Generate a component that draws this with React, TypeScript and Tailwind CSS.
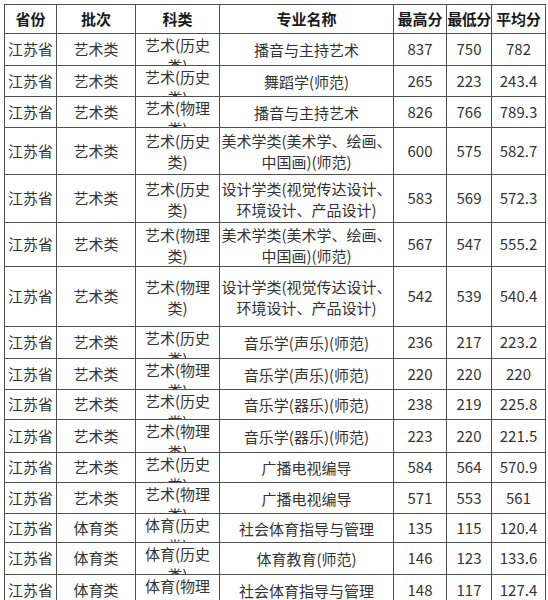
import React from "react";

type Row = {
  id: number;
  h: string;
  batch: string;
  subject: string[];
  major: string[];
  max: string;
  min: string;
  avg: string;
};

const art = "艺术类";
const hist = ["艺术(历史", "类)"];
const phys = ["艺术(物理", "类)"];

const rows: Row[] = [
  { id: 1, h: "h-[32px]", batch: art, subject: hist, major: ["播音与主持艺术"], max: "837", min: "750", avg: "782" },
  { id: 2, h: "h-[31px]", batch: art, subject: hist, major: ["舞蹈学(师范)"], max: "265", min: "223", avg: "243.4" },
  { id: 3, h: "h-[31px]", batch: art, subject: phys, major: ["播音与主持艺术"], max: "826", min: "766", avg: "789.3" },
  { id: 4, h: "h-[47px]", batch: art, subject: hist, major: ["美术学类(美术学、绘画、", "中国画)(师范)"], max: "600", min: "575", avg: "582.7" },
  { id: 5, h: "h-[48px]", batch: art, subject: hist, major: ["设计学类(视觉传达设计、", "环境设计、产品设计)"], max: "583", min: "569", avg: "572.3" },
  { id: 6, h: "h-[44px]", batch: art, subject: phys, major: ["美术学类(美术学、绘画、", "中国画)(师范)"], max: "567", min: "547", avg: "555.2" },
  { id: 7, h: "h-[60px]", batch: art, subject: phys, major: ["设计学类(视觉传达设计、", "环境设计、产品设计)"], max: "542", min: "539", avg: "540.4" },
  { id: 8, h: "h-[32px]", batch: art, subject: hist, major: ["音乐学(声乐)(师范)"], max: "236", min: "217", avg: "223.2" },
  { id: 9, h: "h-[31px]", batch: art, subject: phys, major: ["音乐学(声乐)(师范)"], max: "220", min: "220", avg: "220" },
  { id: 10, h: "h-[30px]", batch: art, subject: hist, major: ["音乐学(器乐)(师范)"], max: "238", min: "219", avg: "225.8" },
  { id: 11, h: "h-[33px]", batch: art, subject: phys, major: ["音乐学(器乐)(师范)"], max: "223", min: "220", avg: "221.5" },
  { id: 12, h: "h-[30px]", batch: art, subject: hist, major: ["广播电视编导"], max: "584", min: "564", avg: "570.9" },
  { id: 13, h: "h-[31px]", batch: art, subject: phys, major: ["广播电视编导"], max: "571", min: "553", avg: "561" },
  { id: 14, h: "h-[29px]", batch: "体育类", subject: ["体育(历史", "类)"], major: ["社会体育指导与管理"], max: "135", min: "115", avg: "120.4" },
  { id: 15, h: "h-[32px]", batch: "体育类", subject: ["体育(历史", "类)"], major: ["体育教育(师范)"], max: "146", min: "123", avg: "133.6" },
  { id: 16, h: "h-[32px]", batch: "体育类", subject: ["体育(物理", "类)"], major: ["社会体育指导与管理"], max: "148", min: "117", avg: "127.4" },
];

const cols = "grid grid-cols-[52px_79px_84px_174px_53px_45px_54px]";
const cell = "flex items-center justify-center text-center border-r border-b border-[#505050] overflow-hidden";
const head = "flex items-center justify-center whitespace-nowrap border-r border-b border-[#505050]";

const Lines = ({ lines }: { lines: string[] }) => (
  <div className="leading-[21px]">
    {lines.map((l) => (
      <div key={l} className="whitespace-nowrap">
        {l}
      </div>
    ))}
  </div>
);

export default function App() {
  return (
    <div className="bg-white min-h-screen pt-1 pl-1 font-['Noto_Sans_CJK_SC',sans-serif] text-[15px] text-[#333]">
      <div className="w-[542px] border-l border-t border-[#505050]">
        <div className={`${cols} h-[29px] font-bold text-[#1a1a1a]`}>
          <div className={head}>省份</div>
          <div className={head}>批次</div>
          <div className={head}>科类</div>
          <div className={head}>专业名称</div>
          <div className={head}>最高分</div>
          <div className={`${head} tracking-[-0.5px]`}>最低分</div>
          <div className={head}>平均分</div>
        </div>
        {rows.map((r) => (
          <div key={r.id} className={`${cols} ${r.h}`}>
            <div className={cell}>江苏省</div>
            <div className={cell}>{r.batch}</div>
            <div className="flex flex-col overflow-hidden border-r border-b border-[#505050] text-center">
              <div className="my-auto">
                <Lines lines={r.subject} />
              </div>
            </div>
            <div className={cell}>
              <Lines lines={r.major} />
            </div>
            <div className={cell}>{r.max}</div>
            <div className={cell}>{r.min}</div>
            <div className={cell}>{r.avg}</div>
          </div>
        ))}
      </div>
    </div>
  );
}
